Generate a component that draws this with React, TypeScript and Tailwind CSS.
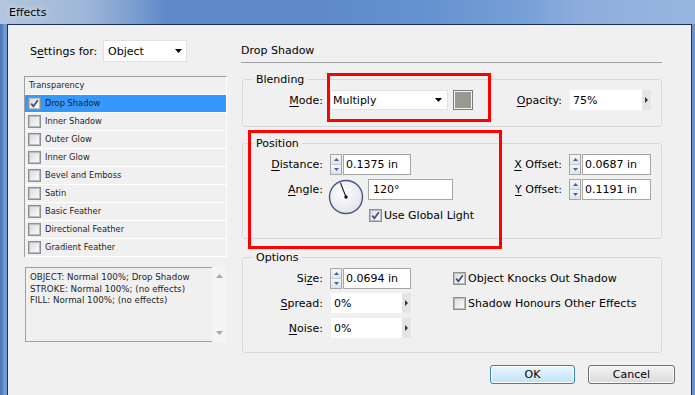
import type { ReactNode } from "react";

const effects = [
  { name: "Drop Shadow", on: true },
  { name: "Inner Shadow", on: false },
  { name: "Outer Glow", on: false },
  { name: "Inner Glow", on: false },
  { name: "Bevel and Emboss", on: false },
  { name: "Satin", on: false },
  { name: "Basic Feather", on: false },
  { name: "Directional Feather", on: false },
  { name: "Gradient Feather", on: false },
];

function U({ children }: { children: ReactNode }) {
  return <span className="underline decoration-1 underline-offset-[2px]">{children}</span>;
}

function Checkbox({ checked = false }: { checked?: boolean }) {
  return (
    <span className="flex h-[13px] w-[13px] shrink-0 items-center justify-center border border-[#8e8f8f] bg-white">
      <span className="flex h-[11px] w-[11px] items-center justify-center border border-[#b9bcc0] bg-linear-to-br from-[#dcdde0] to-[#fafafa]">
        {checked && (
          <svg width="9" height="9" viewBox="0 0 9 9" aria-hidden="true">
            <path d="M1.2 4.6 L3.4 7.3 L7.8 1.2" fill="none" stroke="#3d4f86" strokeWidth="1.7" />
          </svg>
        )}
      </span>
    </span>
  );
}

function Caret() {
  return (
    <svg width="7" height="4" viewBox="0 0 7 4" aria-hidden="true">
      <path d="M0 0 H7 L3.5 4 Z" fill="#000" />
    </svg>
  );
}

function Spinner() {
  return (
    <div className="flex h-[21px] w-[12px] shrink-0 flex-col border border-[#a6a6a6]">
      <span className="flex flex-1 items-center justify-center border-b border-[#c6ccd6] bg-linear-to-b from-[#f4f7fb] to-[#dde4ee]">
        <svg width="5" height="3" viewBox="0 0 5 3" aria-hidden="true">
          <path d="M0 3 L2.5 0 L5 3 Z" fill="#4c5f8d" />
        </svg>
      </span>
      <span className="flex flex-1 items-center justify-center bg-linear-to-b from-[#f4f7fb] to-[#dde4ee]">
        <svg width="5" height="3" viewBox="0 0 5 3" aria-hidden="true">
          <path d="M0 0 L5 0 L2.5 3 Z" fill="#4c5f8d" />
        </svg>
      </span>
    </div>
  );
}

function SpinField({ value, width }: { value: string; width: string }) {
  return (
    <div className="flex items-center gap-[1px]">
      <Spinner />
      <div className={`flex h-[21px] items-center border border-[#a6a6a6] bg-white pl-[2px] ${width}`}>{value}</div>
    </div>
  );
}

function ArrowField({ value, width }: { value: string; width: string }) {
  return (
    <div className={`flex h-[20px] ${width}`}>
      <div className="flex flex-1 items-center bg-white pl-[3px]">{value}</div>
      <div className="flex w-[9px] items-center justify-center bg-[#e4e4e4]">
        <svg width="3" height="6" viewBox="0 0 3 6" aria-hidden="true">
          <path d="M0 0 L3 3 L0 6 Z" fill="#333" />
        </svg>
      </div>
    </div>
  );
}

function Group({ title, children, className }: { title: string; children: ReactNode; className: string }) {
  return (
    <fieldset className={`ml-[2px] w-[420px] rounded-[3px] border border-[#d5dadf] ${className}`}>
      <legend className="ml-[10px] px-[3px] leading-[13px]">{title}</legend>
      {children}
    </fieldset>
  );
}

function Dial() {
  return (
    <svg width="36" height="36" viewBox="0 0 36 36" className="shrink-0" aria-hidden="true">
      <defs>
        <radialGradient id="dialFill" cx="42%" cy="38%" r="70%">
          <stop offset="0%" stopColor="#ffffff" />
          <stop offset="100%" stopColor="#dfe2e7" />
        </radialGradient>
      </defs>
      <circle cx="18" cy="18" r="16.5" fill="url(#dialFill)" stroke="#45567e" strokeWidth="1.4" />
      <line x1="18" y1="18" x2="12.5" y2="4" stroke="#1a1a1a" strokeWidth="1.1" />
      <circle cx="18" cy="18" r="1.7" fill="#111" />
    </svg>
  );
}

function LeftPane() {
  return (
    <div className="w-[219px] shrink-0 pl-[16px] pt-[15px]">
      <div className="flex h-[22px] items-center">
        <span className="ml-[6px] w-[73px]">
          S<U>e</U>ttings for:
        </span>
        <div className="flex h-[22px] w-[84px] items-center justify-between border border-[#e1e1e1] bg-white pl-[4px] pr-[4px]">
          Object
          <Caret />
        </div>
      </div>

      <div className="mt-[14px] w-[203px] border-l border-t border-r border-l-[#a0a0a0] border-t-[#a0a0a0] border-r-white text-[8.3px] text-[#1e1e1e]">
        <div className="flex h-[18px] items-center border-b border-white pl-[4px]">Transparency</div>
        {effects.map((fx) => (
          <div
            key={fx.name}
            className={`flex h-[18px] items-center gap-[4px] border-b border-white pl-[3px] ${fx.on ? "bg-[#3399ff]" : ""}`}
          >
            <Checkbox checked={fx.on} />
            <span>{fx.name}</span>
          </div>
        ))}
      </div>

      <div className="ml-[1px] mt-[10px] flex h-[75px] w-[201px]">
        <div className="flex-1 border-y border-l border-[#a0a0a0] pl-[4px] pt-[4px] text-[8.7px] leading-[11.5px] text-[#1e1e1e]">
          <p>OBJECT: Normal 100%; Drop Shadow</p>
          <p>STROKE: Normal 100%; (no effects)</p>
          <p>FILL: Normal 100%; (no effects)</p>
        </div>
        <div className="flex w-[14px] flex-col items-center justify-between bg-[#f4f4f4] pb-[7px] pt-[7px]">
          <svg width="7" height="4" viewBox="0 0 7 4" aria-hidden="true">
            <path d="M0 4 L3.5 0 L7 4 Z" fill="#a8a8a8" />
          </svg>
          <svg width="7" height="4" viewBox="0 0 7 4" aria-hidden="true">
            <path d="M0 0 H7 L3.5 4 Z" fill="#a8a8a8" />
          </svg>
        </div>
      </div>
    </div>
  );
}

function RightPane() {
  return (
    <div className="ml-[13px] w-[451px] shrink-0">
      <div className="ml-[1px] h-[38px] w-[421px] border-b border-[#a0a0a0] pt-[19px]">Drop Shadow</div>

      <Group title="Blending" className="mt-[10px]">
        <div className="flex h-[20px] items-center pb-0 pt-0 mt-[4px] mb-[16px]">
          <span className="w-[80px] text-right">
            <U>M</U>ode:
          </span>
          <div className="ml-[7px] flex h-[20px] w-[118px] items-center justify-between border border-[#e1e1e1] bg-white pl-[2px] pr-[5px]">
            Multiply
            <Caret />
          </div>
          <div className="ml-[5px] h-[20px] w-[20px] border border-[#7a7a7a] bg-[#f4f4f4] p-[1px]">
            <div className="h-full w-full bg-[#9a998f]" />
          </div>
          <span className="ml-[20px] w-[69px] text-right">
            <U>O</U>pacity:
          </span>
          <div className="ml-[8px]">
            <ArrowField value="75%" width="w-[81px]" />
          </div>
        </div>
      </Group>

      <Group title="Position" className="mt-[10px]">
        <div className="mb-[16px] mt-[4px] flex">
          <div className="w-[250px]">
            <div className="flex h-[21px] items-center">
              <span className="w-[80px] text-right">
                <U>D</U>istance:
              </span>
              <div className="ml-[7px]">
                <SpinField value="0.1375 in" width="w-[68px]" />
              </div>
            </div>
            <div className="mt-[4px] flex">
              <span className="flex h-[21px] w-[80px] items-center justify-end">
                <U>A</U>ngle:
              </span>
              <div className="ml-[5px]">
                <Dial />
              </div>
              <div className="ml-[4px] flex flex-col">
                <div className="flex h-[21px] w-[85px] items-center border border-[#a6a6a6] bg-white pl-[4px]">120°</div>
                <div className="mt-[8px] flex h-[14px] items-center gap-[2px] pl-[1px]">
                  <Checkbox checked />
                  <span>Use Global Light</span>
                </div>
              </div>
            </div>
          </div>
          <div className="flex flex-col gap-[4px]">
            <div className="flex h-[21px] items-center">
              <span className="w-[69px] text-right">
                <U>X</U> Offset:
              </span>
              <div className="ml-[7px]">
                <SpinField value="0.0687 in" width="w-[69px]" />
              </div>
            </div>
            <div className="flex h-[21px] items-center">
              <span className="w-[69px] text-right">
                <U>Y</U> Offset:
              </span>
              <div className="ml-[7px]">
                <SpinField value="0.1191 in" width="w-[69px]" />
              </div>
            </div>
          </div>
        </div>
      </Group>

      <Group title="Options" className="mt-[12px]">
        <div className="mb-[14px] mt-[4px] flex">
          <div className="w-[210px]">
            <div className="flex h-[21px] items-center">
              <span className="w-[80px] text-right">
                Si<U>z</U>e:
              </span>
              <div className="ml-[7px]">
                <SpinField value="0.0694 in" width="w-[68px]" />
              </div>
            </div>
            <div className="mt-[4px] flex h-[20px] items-center">
              <span className="w-[80px] text-right">
                <U>S</U>pread:
              </span>
              <div className="ml-[8px]">
                <ArrowField value="0%" width="w-[80px]" />
              </div>
            </div>
            <div className="mt-[5px] flex h-[20px] items-center">
              <span className="w-[80px] text-right">
                <U>N</U>oise:
              </span>
              <div className="ml-[8px]">
                <ArrowField value="0%" width="w-[80px]" />
              </div>
            </div>
          </div>
          <div className="flex flex-col">
            <div className="flex h-[21px] items-center gap-[2px]">
              <Checkbox checked />
              <span>Object Knocks Out Shadow</span>
            </div>
            <div className="mt-[4px] flex h-[20px] items-center gap-[2px]">
              <Checkbox />
              <span>Shadow Honours Other Effects</span>
            </div>
          </div>
        </div>
      </Group>

      <div className="mt-[12px] flex justify-end gap-[13px] pr-[16px]">
        <button
          type="button"
          className="h-[19px] w-[85px] rounded-[3px] border border-[#3c7fb1] bg-linear-to-b from-[#eaf6fd] to-[#bfe3f7] leading-[17px] shadow-[inset_0_0_0_1px_#ffffff]"
        >
          OK
        </button>
        <button
          type="button"
          className="h-[19px] w-[87px] rounded-[3px] border border-[#707070] bg-linear-to-b from-[#f3f3f3] to-[#dadada] leading-[17px] shadow-[inset_0_0_0_1px_#fbfbfb]"
        >
          Cancel
        </button>
      </div>
    </div>
  );
}

export default function App() {
  return (
    <div className="relative h-[395px] w-[695px] overflow-hidden bg-[#5b84c4] font-['DejaVu_Sans',sans-serif] text-[11px] leading-[13px] text-black">
      <div className="flex h-[24px] items-center bg-[linear-gradient(90deg,#b3c5dc_0%,#9fb7d8_12%,#7c9fd0_19%,#5d88c9_24%,#5d89cb_45%,#6592d0_62%,#76a0d6_75%,#8eaddd_84%,#98b6e0_100%)] pl-[9px] [text-shadow:0_0_6px_rgba(255,255,255,0.9)]">
        Effects
      </div>
      <div className="flex h-[371px]">
        <div className="w-[7px] bg-[linear-gradient(90deg,#4d76b8_0%,#5b84c4_40%,#74a0d8_60%,#6d98d2_100%)]" />
        <div className="flex flex-1 border-x border-t border-[#1f3159] bg-[#f0f0f0]">
          <LeftPane />
          <RightPane />
        </div>
        <div className="w-[3px] bg-[#6a94d0]" />
      </div>

      <div className="pointer-events-none absolute left-[327px] top-[73px] h-[49px] w-[164px] border-[3px] border-[#ff0000]" />
      <div className="pointer-events-none absolute left-[248px] top-[130px] h-[119px] w-[254px] border-[3px] border-[#ff0000]" />
    </div>
  );
}
